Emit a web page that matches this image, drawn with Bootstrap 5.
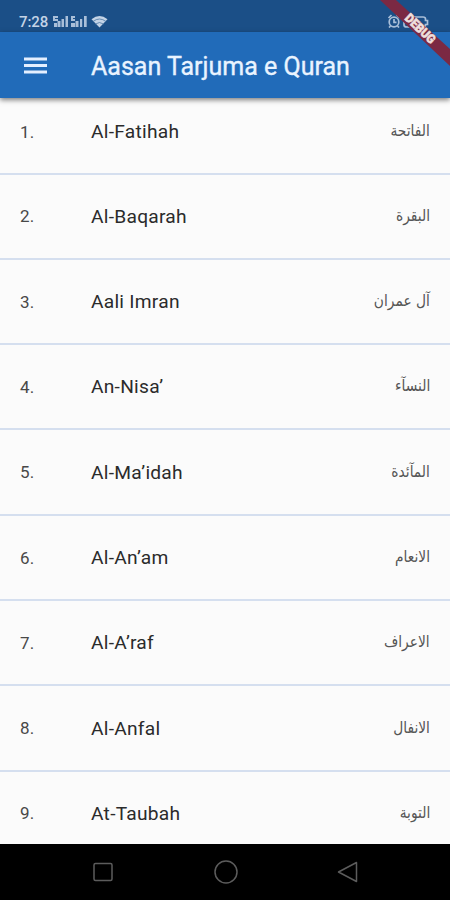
<!DOCTYPE html>
<html lang="en">
<head>
<meta charset="utf-8">
<meta name="viewport" content="width=device-width, initial-scale=1">
<title>Aasan Tarjuma e Quran</title>
<link href="https://cdn.jsdelivr.net/npm/bootstrap@5.3.0/dist/css/bootstrap.min.css" rel="stylesheet">
<style>
  body { font-family: Roboto, "DejaVu Sans", sans-serif; background: #fbfbfb; }
  .screen { width: 450px; height: 900px; }
  .status { height: 32px; background: #1b4f87; color: #c3d3e6; font-size: 15px; padding: 12px 19px 0 19px; line-height: 20px; }
  .status .clock { width: 34px; letter-spacing: -.1px; font-weight: 500; }
  .appbar { height: 66px; background: #216bb9; color: #e9f3ff; padding: 3px 0 0 23px; box-shadow: 0 2px 5px rgba(0,0,0,.5); z-index: 2; }
  .appbar h1 { font-size: 25px; font-weight: 400; margin-left: 43px; letter-spacing: 0; line-height: 30px; -webkit-text-stroke: .35px #e9f3ff; }
  .surahs { min-height: 0; }
  .surah { height: 85.3px; border-bottom: 2px solid #d5dfef; padding: 2px 20px 0 20px; flex: none; color: #2b2b2b; }
  .surah:first-child { height: 76.5px; padding-bottom: 8px; }
  .num { width: 71px; font-size: 17px; color: #484848; letter-spacing: .3px; }
  .latin { font-size: 19.200px; letter-spacing: .25px; }
  .arabic { font-family: "DejaVu Sans", sans-serif; font-size: 15px; color: #555; transform: scale(.92, 1.06); transform-origin: right center; padding-bottom: 2px; }
  .sysnav { height: 56px; background: #000; padding: 0 90px 0 91px; }
  .debug { width: 80px; height: 80px; z-index: 3; }
</style>
<script src="https://cdn.jsdelivr.net/npm/bootstrap@5.3.0/dist/js/bootstrap.bundle.min.js"></script>
</head>
<body>
<div class="screen d-flex flex-column position-relative overflow-hidden">
  <div class="status d-flex flex-shrink-0">
    <span class="clock">7:28</span>
    <svg width="56" height="14" viewBox="0 0 56 14" class="mt-1" fill="#a9bfd9">
      <path d="M0 0h5v2H2v1h3v2H0zM1 7h3v4H1zM4.500 5h3v6h-3zM8.500 3h2.500v8H8.500zM12.500 0H15v11h-2.500zM18 0h4v2h-2v1h2v2h-4zM18 7h4v4h-4zM22.500 5h3v6h-3zM27 3h2.200v8H27zM31 0h2.700v11H31z"/>
      <path d="M38.500 3.200Q46.500-3 54.500 3.200L46.500 11.500z" fill="#c3d3e6"/>
      <path d="M40 5.500Q46.500.5 53 5.500M42.500 8Q46.500 5 50.500 8" fill="none" stroke="#4d78a5" stroke-width=".8"/>
    </svg>
    <svg width="46" height="16" viewBox="0 0 46 16" class="ms-auto me-n1" fill="none" stroke="#a9bfd9" stroke-width="1.700">
      <circle cx="9" cy="10" r="4.800"/><path d="M9 7v3.300h2.500M3.500 6l3-3M14.500 6l-3-3M5.500 14L4 15.500M12.500 14l1.500 1.500"/>
      <path d="M22 5h16q2.500 0 2.500 2v1.500h2v4h-2V13q0 2-2.500 2H22q-3 0-3-2V7.500Q19 5 22 5z"/>
    </svg>
  </div>
  <header class="appbar d-flex align-items-center flex-shrink-0 position-relative">
    <svg width="25" height="18" viewBox="0 0 25 18" class="mb-1"><path d="M1 3h23M1 9.500h23M1 16h23" stroke="#e4efff" stroke-width="2.800"/></svg>
    <h1 class="mb-0">Aasan Tarjuma e Quran</h1>
  </header>
  <main class="surahs flex-grow-1 overflow-hidden d-flex flex-column">
    <div class="surah d-flex align-items-center"><span class="num">1.</span><span class="latin">Al-Fatihah</span><span class="arabic ms-auto" lang="ar" dir="rtl">الفاتحة</span></div>
    <div class="surah d-flex align-items-center"><span class="num">2.</span><span class="latin">Al-Baqarah</span><span class="arabic ms-auto" lang="ar" dir="rtl">البقرة</span></div>
    <div class="surah d-flex align-items-center"><span class="num">3.</span><span class="latin">Aali Imran</span><span class="arabic ms-auto" lang="ar" dir="rtl">آل عمران</span></div>
    <div class="surah d-flex align-items-center"><span class="num">4.</span><span class="latin">An-Nisa’</span><span class="arabic ms-auto" lang="ar" dir="rtl">النسآء</span></div>
    <div class="surah d-flex align-items-center"><span class="num">5.</span><span class="latin">Al-Ma’idah</span><span class="arabic ms-auto" lang="ar" dir="rtl">المآئدة</span></div>
    <div class="surah d-flex align-items-center"><span class="num">6.</span><span class="latin">Al-An’am</span><span class="arabic ms-auto" lang="ar" dir="rtl">الانعام</span></div>
    <div class="surah d-flex align-items-center"><span class="num">7.</span><span class="latin">Al-A’raf</span><span class="arabic ms-auto" lang="ar" dir="rtl">الاعراف</span></div>
    <div class="surah d-flex align-items-center"><span class="num">8.</span><span class="latin">Al-Anfal</span><span class="arabic ms-auto" lang="ar" dir="rtl">الانفال</span></div>
    <div class="surah d-flex align-items-center"><span class="num">9.</span><span class="latin">At-Taubah</span><span class="arabic ms-auto" lang="ar" dir="rtl">التوبة</span></div>
  </main>
  <nav class="sysnav d-flex justify-content-between align-items-center flex-shrink-0" aria-label="System">
    <svg width="24" height="24" fill="none" stroke="#5c5c5c" stroke-width="1.500"><rect x="3" y="3.500" width="18" height="17" rx="1.500"/></svg>
    <svg width="24" height="24" fill="none" stroke="#5c5c5c" stroke-width="1.500"><circle cx="12" cy="12" r="11"/></svg>
    <svg width="24" height="24" fill="none" stroke="#5c5c5c" stroke-width="1.500" stroke-linejoin="round"><path d="M20.500 2.500v19L2.500 12z"/></svg>
  </nav>
  <svg class="debug position-absolute top-0 end-0" viewBox="0 0 80 80">
    <path d="M10 0H26L80 49V66z" fill="#7b2943"/>
    <text x="0" y="4.500" transform="translate(50.500 28.500) rotate(43.500)" text-anchor="middle" textLength="37" lengthAdjust="spacingAndGlyphs" font-family="Roboto, sans-serif" font-weight="900" font-size="12.500" fill="#eedfdc" stroke="#eedfdc" stroke-width=".6">DEBUG</text>
  </svg>
</div>
</body>
</html>
